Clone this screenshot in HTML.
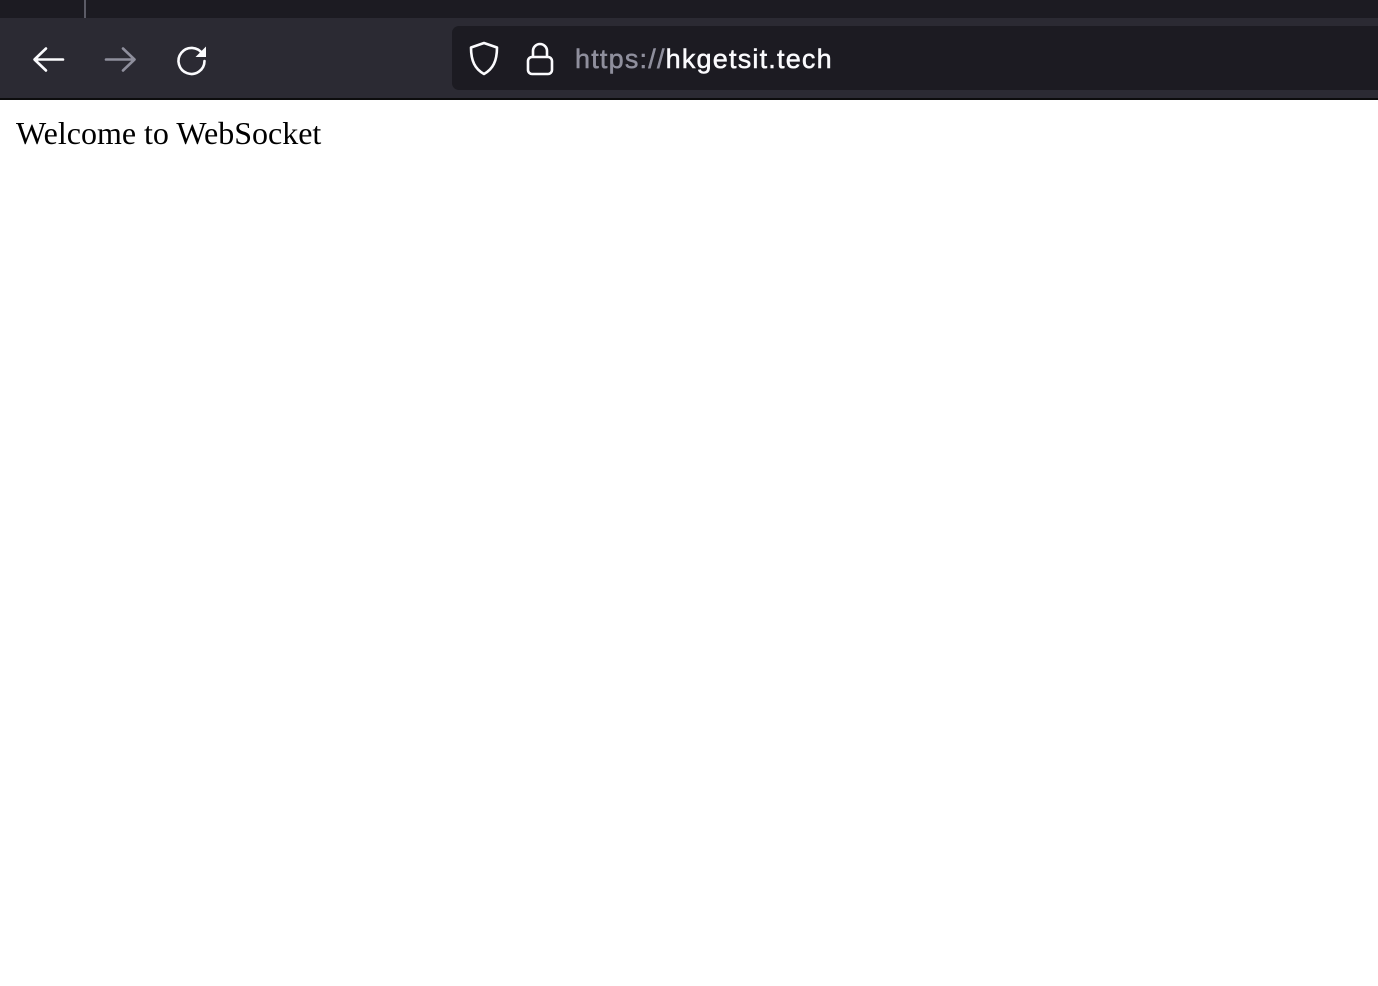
<!DOCTYPE html>
<html><head><meta charset="utf-8"><style>
html,body{margin:0;padding:0;width:1378px;height:986px;background:#fff;overflow:hidden}
.tabs{position:absolute;left:0;top:0;width:1378px;height:18px;background:#1c1b22}
.tabs .sep{position:absolute;left:84px;top:0;width:2px;height:18px;background:#5b5b66}
.tool{position:absolute;left:0;top:18px;width:1378px;height:80px;background:#2b2a33}
.line{position:absolute;left:0;top:98px;width:1378px;height:2px;background:#0c0c0d}
.url{position:absolute;left:452px;top:26px;width:940px;height:64px;background:#1c1b22;border-radius:7px}
.txt{position:absolute;left:575px;top:42px;font:400 27px/34px "Liberation Sans",sans-serif;color:#fbfbfe;letter-spacing:1.2px;-webkit-text-stroke:0.5px #fbfbfe}
.txt span{color:#8f8f9d;-webkit-text-stroke:0.5px #8f8f9d}
svg{position:absolute}
.h{position:absolute;left:16px;top:117px;font:32px/1 "Liberation Serif",serif;color:#000;white-space:nowrap}
</style></head><body>
<div class="tabs"><div class="sep"></div></div>
<div class="tool"></div>
<div class="line"></div>
<div class="url"></div>
<svg style="left:30px;top:42px" width="36" height="36" viewBox="0 0 36 36"><path d="M33 17.5H5M16 6.5L4.5 17.5L16 28.5" fill="none" stroke="#fbfbfe" stroke-width="2.6" stroke-linecap="round" stroke-linejoin="round"/></svg>
<svg style="left:102px;top:42px" width="36" height="36" viewBox="0 0 36 36"><path d="M4 17.5H32M21 6.5L32.5 17.5L21 28.5" fill="none" stroke="#8f8f9d" stroke-width="2.6" stroke-linecap="round" stroke-linejoin="round"/></svg>
<svg style="left:174px;top:42px" width="36" height="36" viewBox="0 0 36 36"><path d="M28.5 12A13 13 0 1 0 30.5 19" fill="none" stroke="#fbfbfe" stroke-width="2.6" stroke-linecap="round"/><path d="M32 4.5V15H21.5Z" fill="#fbfbfe"/></svg>
<svg style="left:466px;top:40px" width="36" height="38" viewBox="0 0 36 38"><path d="M18 3L31 7.5C31 21 27 29 18 34C9 29 5 21 5 7.5Z" fill="none" stroke="#fbfbfe" stroke-width="2.6" stroke-linejoin="round"/></svg>
<svg style="left:524px;top:40px" width="32" height="38" viewBox="0 0 32 38"><rect x="4" y="17" width="24" height="17" rx="4" fill="none" stroke="#fbfbfe" stroke-width="2.6"/><path d="M9 17V11A7 7 0 0 1 23 11V17" fill="none" stroke="#fbfbfe" stroke-width="2.6"/></svg>
<div class="txt"><span>https://</span>hkgetsit.tech</div>
<div class="h">Welcome to WebSocket</div>
</body></html>
